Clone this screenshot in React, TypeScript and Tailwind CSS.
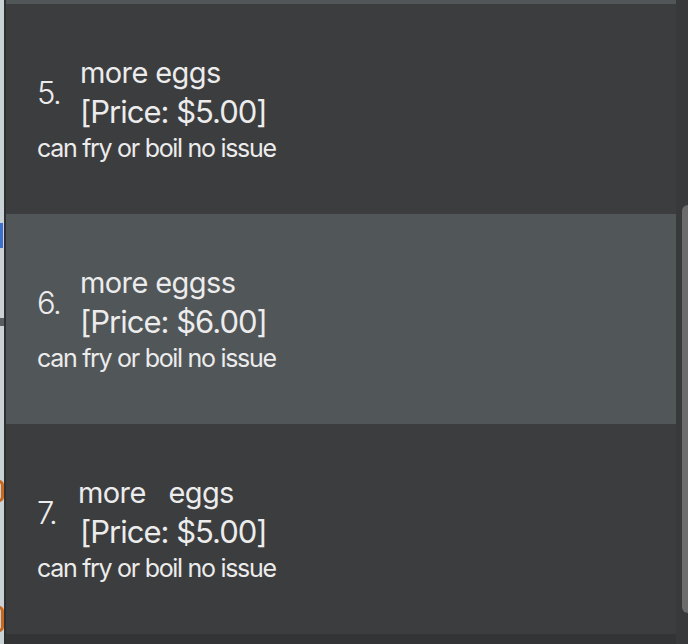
import React from "react";

const items = [
  { n: "5.", title: "more eggs", price: "[Price: $5.00]", desc: "can fry or boil no issue", sel: false, shift: false },
  { n: "6.", title: "more eggss", price: "[Price: $6.00]", desc: "can fry or boil no issue", sel: true, shift: false },
  { n: "7.", title: "more   eggs", price: "[Price: $5.00]", desc: "can fry or boil no issue", sel: false, shift: true },
];

export default function App() {
  return (
    <div
      className="w-[688px] h-[644px] overflow-hidden flex bg-[#3c3d3f] text-[#ececec]"
      style={{ fontFamily: "Inter, 'Noto Sans', sans-serif" }}
    >
      {/* left strip of window behind */}
      <div className="relative w-[4px] h-full bg-[#cbd2d5] shrink-0">
        <div className="absolute left-0 top-[223px] w-[3px] h-[25px] bg-[#3d6fce]" />
        <div className="absolute left-0 top-[318px] w-[4px] h-[8px] bg-[#5a5d60]" />
        <div className="absolute left-[-6px] top-[480px] w-[10px] h-[22px] rounded-full border-[3px] border-[#c8681f]" />
        <div className="absolute left-[-6px] top-[606px] w-[10px] h-[26px] rounded-full border-[3px] border-[#c8681f]" />
      </div>
      <div className="w-[2px] h-full bg-[#2e2f31] shrink-0" />
      <div className="flex flex-col w-[670px] shrink-0">
        <div className="h-[4px] bg-[#515659]" />
        {items.map((it, i) => (
          <div
            key={i}
            className={`h-[210px] flex flex-col justify-center pl-[31px] ${it.sel ? "bg-[#515659]" : "bg-[#3c3d3f]"}`}
          >
            <div className="flex items-center">
              <div className="text-[31px] tracking-[-1.5px] w-[43px] leading-none font-light">{it.n}</div>
              <div className="flex flex-col">
                <div className={`text-[29px] tracking-[-0.6px] leading-[40px] whitespace-pre ${it.shift ? "-ml-[2px]" : ""}`}>{it.title}</div>
                <div className="text-[31px] tracking-[-1px] leading-[38px] whitespace-pre">{it.price}</div>
              </div>
            </div>
            <div className="text-[25px] tracking-[-1.3px] leading-[34px] whitespace-pre">{it.desc}</div>
          </div>
        ))}
        <div className="flex-1 bg-[#333436]" />
      </div>
      <div className="relative flex-1 bg-[#38393b]">
        <div className="absolute left-[6px] right-0 top-[205px] h-[408px] rounded-l-[6px] bg-[#6b6b6c]" />
      </div>
    </div>
  );
}
